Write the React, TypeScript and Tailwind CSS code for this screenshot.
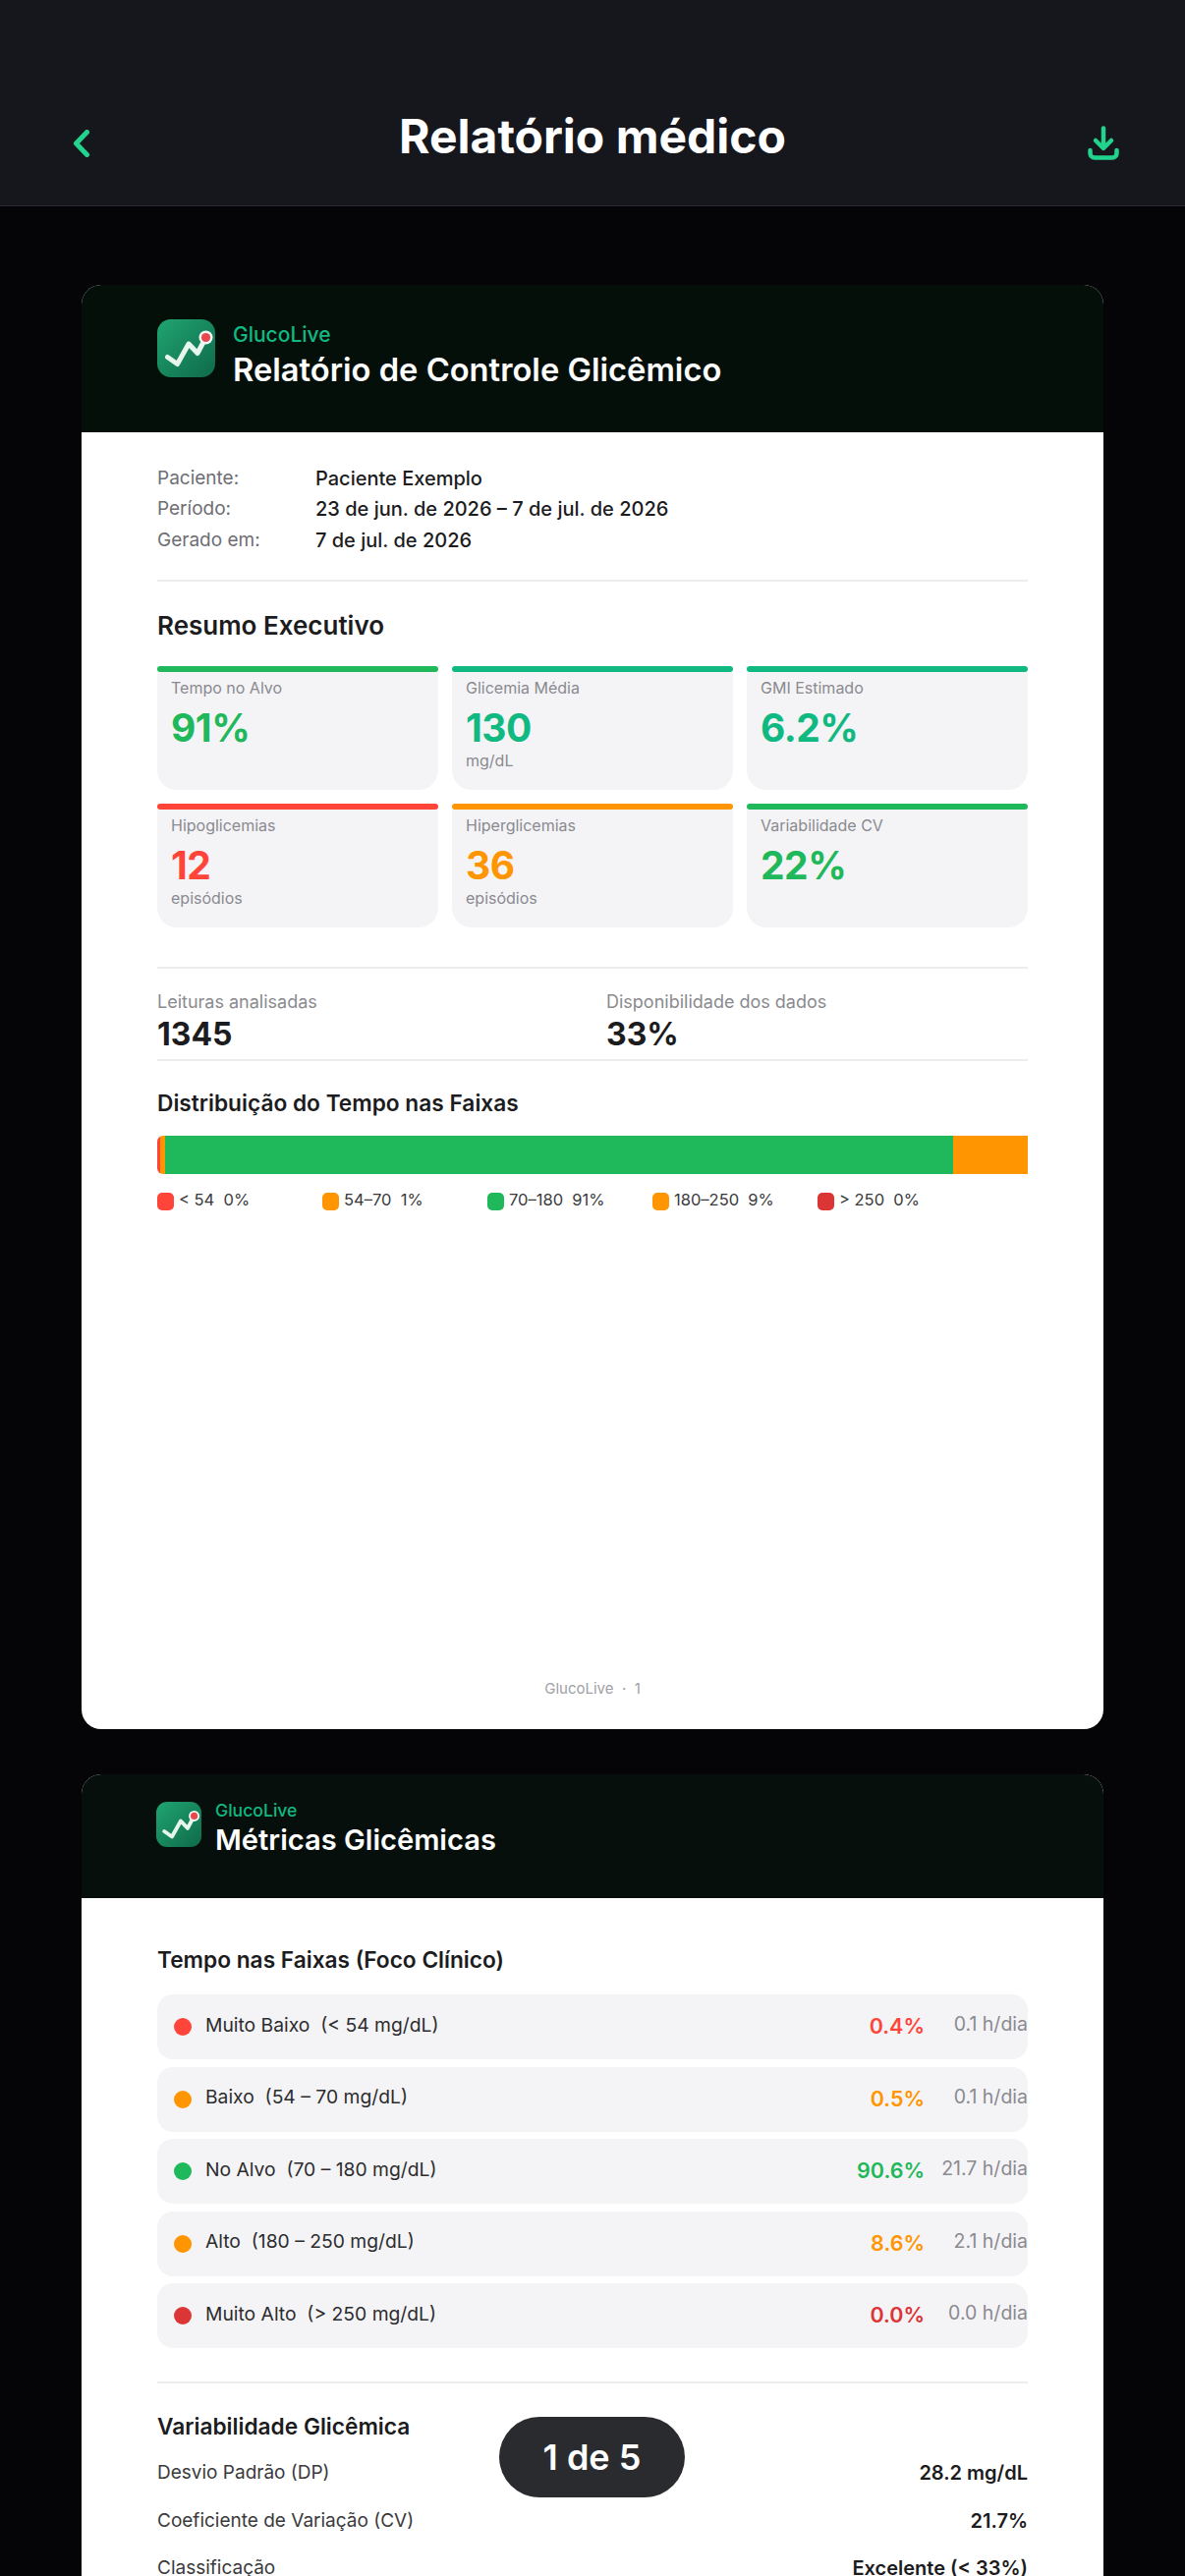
import React from 'react';

const FONT = "font-['Inter',sans-serif]";

const LogoMark: React.FC<{ className: string }> = ({ className }) => (
  <div className={`${className} shrink-0 bg-gradient-to-br from-[#20a572] to-[#0f6a4a]`}>
    <svg viewBox="0 0 59 59" className="w-full h-full" fill="none">
      <path d="M10.5 38.5 L20.5 45.5 L32 25 L41 34.5 L49.5 18.5" stroke="#e6f5ee" strokeWidth="5" strokeLinecap="round" strokeLinejoin="round" />
      <circle cx="49.5" cy="18.5" r="7" fill="#f3f7f5" />
      <circle cx="49.5" cy="18.5" r="4.6" fill="#e5484d" />
    </svg>
  </div>
);

interface StatProps {
  label: string;
  value: string;
  sub?: string;
  bar: string;
  text: string;
}

const StatCard: React.FC<StatProps> = ({ label, value, sub, bar, text }) => (
  <div className="h-[126px] flex flex-col">
    <div className={`h-[6px] rounded-[3px] ${bar}`} />
    <div className="flex-1 bg-[#f4f4f7] rounded-b-[20px] px-[14px] pt-[6px]">
      <div className="text-[16px] leading-[20px] text-[#8a8a8f]">{label}</div>
      <div className={`mt-[9px] text-[39px] leading-[44px] font-bold tracking-[-0.5px] ${text}`}>{value}</div>
      {sub && <div className="mt-[1px] text-[16px] leading-[20px] text-[#8a8a8f]">{sub}</div>}
    </div>
  </div>
);

const stats: StatProps[] = [
  { label: 'Tempo no Alvo', value: '91%', bar: 'bg-[#1fb85a]', text: 'text-[#1fb85a]' },
  { label: 'Glicemia Média', value: '130', sub: 'mg/dL', bar: 'bg-[#10b981]', text: 'text-[#10b981]' },
  { label: 'GMI Estimado', value: '6.2%', bar: 'bg-[#10b981]', text: 'text-[#10b981]' },
  { label: 'Hipoglicemias', value: '12', sub: 'episódios', bar: 'bg-[#ff453a]', text: 'text-[#ff453a]' },
  { label: 'Hiperglicemias', value: '36', sub: 'episódios', bar: 'bg-[#ff9500]', text: 'text-[#ff9500]' },
  { label: 'Variabilidade CV', value: '22%', bar: 'bg-[#1fb85a]', text: 'text-[#1fb85a]' },
];

const legend = [
  { label: '< 54  0%', color: 'bg-[#ff453a]' },
  { label: '54–70  1%', color: 'bg-[#ff9500]' },
  { label: '70–180  91%', color: 'bg-[#1fb85a]' },
  { label: '180–250  9%', color: 'bg-[#ff9500]' },
  { label: '> 250  0%', color: 'bg-[#dc3535]' },
];

const ranges = [
  { label: 'Muito Baixo  (< 54 mg/dL)', pct: '0.4%', hours: '0.1 h/dia', dot: 'bg-[#ff453a]', text: 'text-[#ff453a]' },
  { label: 'Baixo  (54 – 70 mg/dL)', pct: '0.5%', hours: '0.1 h/dia', dot: 'bg-[#ff9500]', text: 'text-[#ff9500]' },
  { label: 'No Alvo  (70 – 180 mg/dL)', pct: '90.6%', hours: '21.7 h/dia', dot: 'bg-[#1fb85a]', text: 'text-[#1fb85a]' },
  { label: 'Alto  (180 – 250 mg/dL)', pct: '8.6%', hours: '2.1 h/dia', dot: 'bg-[#ff9500]', text: 'text-[#ff9500]' },
  { label: 'Muito Alto  (> 250 mg/dL)', pct: '0.0%', hours: '0.0 h/dia', dot: 'bg-[#dc3535]', text: 'text-[#dc3535]' },
];

const variability = [
  { label: 'Desvio Padrão (DP)', value: '28.2 mg/dL' },
  { label: 'Coeficiente de Variação (CV)', value: '21.7%' },
  { label: 'Classificação', value: 'Excelente (< 33%)' },
];

const patient = [
  { label: 'Paciente:', value: 'Paciente Exemplo' },
  { label: 'Período:', value: '23 de jun. de 2026 – 7 de jul. de 2026' },
  { label: 'Gerado em:', value: '7 de jul. de 2026' },
];

export default function App() {
  return (
    <div className={`relative h-[2622px] overflow-hidden bg-[#050507] ${FONT}`}>
      <header className="h-[210px] pt-[72px] pl-[75px] pr-[67px] flex items-center bg-[#16171c] border-b border-[#2a2b30]">
        <div className="w-[24px] mt-[10px]">
          <svg width="16" height="28" viewBox="0 0 16 28" fill="none">
            <path d="M13.5 2.5 L2.5 14 L13.5 25.5" stroke="#22d38e" strokeWidth="5" strokeLinecap="round" strokeLinejoin="round" />
          </svg>
        </div>
        <h1 className="flex-1 text-center text-[48px] leading-[58px] font-bold text-white -mt-[4px]">Relatório médico</h1>
        <div className="mt-[10px]">
          <svg width="32" height="35" viewBox="0 0 32 35" fill="none">
            <path d="M16 2.5 V22 M8 15 L16 23 L24 15" stroke="#22d38e" strokeWidth="4.5" strokeLinecap="round" strokeLinejoin="round" />
            <path d="M2.5 25 V28 A4.5 4.5 0 0 0 7 32.5 H25 A4.5 4.5 0 0 0 29.5 28 V25" stroke="#22d38e" strokeWidth="4.5" strokeLinecap="round" />
          </svg>
        </div>
      </header>

      <main className="pt-[80px] px-[83px] flex flex-col gap-[46px]">
        {/* page 1 */}
        <section className="h-[1470px] rounded-[20px] bg-white overflow-hidden flex flex-col">
          <div className="h-[150px] shrink-0 bg-[#050f0a] pl-[77px] pt-[35px] flex gap-[18px]">
            <LogoMark className="w-[59px] h-[59px] rounded-[14px]" />
            <div className="pt-[3px]">
              <div className="text-[21px] leading-[26px] font-medium text-[#10b981]">GlucoLive</div>
              <div className="mt-[2px] text-[32.7px] leading-[40px] font-semibold text-white">Relatório de Controle Glicêmico</div>
            </div>
          </div>

          <div className="flex-1 flex flex-col px-[77px] pt-[31px]">
            {patient.map((row) => (
              <div key={row.label} className="flex h-[31.5px] items-center">
                <span className="w-[161px] text-[19px] text-[#6e6e73]">{row.label}</span>
                <span className="text-[20px] font-medium text-[#1c1c1e]">{row.value}</span>
              </div>
            ))}
            <div className="mt-[24px] h-[2px] bg-[#ececee]" />

            <h2 className="mt-[29px] text-[26px] leading-[32px] font-semibold text-[#1c1c1e]">Resumo Executivo</h2>
            <div className="mt-[25px] grid grid-cols-3 gap-[14px]">
              {stats.map((s) => (
                <StatCard key={s.label} {...s} />
              ))}
            </div>
            <div className="mt-[40px] h-[2px] bg-[#ececee]" />

            <div className="mt-[23px] grid grid-cols-[457px_1fr]">
              <div>
                <div className="text-[18px] leading-[22px] text-[#8a8a8f]">Leituras analisadas</div>
                <div className="mt-[3px] text-[32px] leading-[38px] font-bold text-[#1c1c1e]">1345</div>
              </div>
              <div>
                <div className="text-[18px] leading-[22px] text-[#8a8a8f]">Disponibilidade dos dados</div>
                <div className="mt-[3px] text-[32px] leading-[38px] font-bold text-[#1c1c1e]">33%</div>
              </div>
            </div>
            <div className="mt-[6px] h-[2px] bg-[#ececee]" />

            <h3 className="mt-[28px] text-[22.7px] leading-[30px] font-semibold text-[#1c1c1e]">Distribuição do Tempo nas Faixas</h3>
            <div className="mt-[18px] h-[39px] flex overflow-hidden rounded-l-[6px]">
              <div className="w-[3px] bg-[#ff453a]" />
              <div className="w-[5px] bg-[#ff9500]" />
              <div className="w-[802px] bg-[#1fb85a]" />
              <div className="flex-1 bg-[#ff9500]" />
            </div>
            <div className="mt-[19px] flex">
              {legend.map((l) => (
                <div key={l.label} className="w-[168px] flex items-center gap-[5px]">
                  <span className={`w-[17px] h-[18px] rounded-[5px] ${l.color}`} />
                  <span className="-mt-[3px] text-[16.5px] leading-[18px] whitespace-pre text-[#3a3a3c]">{l.label}</span>
                </div>
              ))}
            </div>

            <div className="mt-auto pb-[31px] text-center text-[15px] leading-[20px] whitespace-pre text-[#a0a0a5]">GlucoLive  ·  1</div>
          </div>
        </section>

        {/* page 2 */}
        <section className="rounded-t-[20px] bg-white overflow-hidden">
          <div className="h-[126px] bg-[#060f0b] pl-[76px] pt-[28px] flex gap-[14px]">
            <LogoMark className="w-[46px] h-[46px] rounded-[11px]" />
            <div className="-mt-[2px]">
              <div className="text-[17.6px] leading-[22px] font-medium text-[#10b981]">GlucoLive</div>
              <div className="mt-[1px] text-[29.1px] leading-[36px] font-semibold text-white">Métricas Glicêmicas</div>
            </div>
          </div>

          <div className="px-[77px] pt-[48px]">
            <h3 className="text-[22.7px] leading-[30px] font-semibold text-[#1c1c1e]">Tempo nas Faixas (Foco Clínico)</h3>
            <div className="mt-[20px] flex flex-col gap-[7.5px]">
              {ranges.map((r) => (
                <div key={r.label} className="h-[66px] rounded-[16px] bg-[#f4f4f7] pl-[17px] flex items-center">
                  <span className={`w-[18px] h-[18px] rounded-full ${r.dot}`} />
                  <span className="ml-[14px] -mt-[4px] flex-1 text-[19.3px] whitespace-pre text-[#2c2c2e]">{r.label}</span>
                  <span className={`-mt-[1px] text-[21.5px] font-semibold ${r.text}`}>{r.pct}</span>
                  <span className="w-[105px] -mt-[4px] text-right text-[19.5px] text-[#8a8a8f]">{r.hours}</span>
                </div>
              ))}
            </div>
            <div className="mt-[34px] h-[2px] bg-[#ececee]" />

            <h3 className="mt-[29px] text-[22.7px] leading-[30px] font-semibold text-[#1c1c1e]">Variabilidade Glicêmica</h3>
            <div className="mt-[8px]">
              {variability.map((v) => (
                <div key={v.label} className="h-[48.5px] flex items-center justify-between">
                  <span className="text-[19px] text-[#3a3a3c]">{v.label}</span>
                  <span className="text-[20px] font-semibold text-[#1c1c1e]">{v.value}</span>
                </div>
              ))}
            </div>
          </div>
        </section>
      </main>

      <div className="absolute left-[508px] bottom-[80px] w-[189px] h-[82px] rounded-full bg-[#2a2b2f] flex items-center justify-center text-[36px] font-semibold text-white">
        1 de 5
      </div>
    </div>
  );
}
